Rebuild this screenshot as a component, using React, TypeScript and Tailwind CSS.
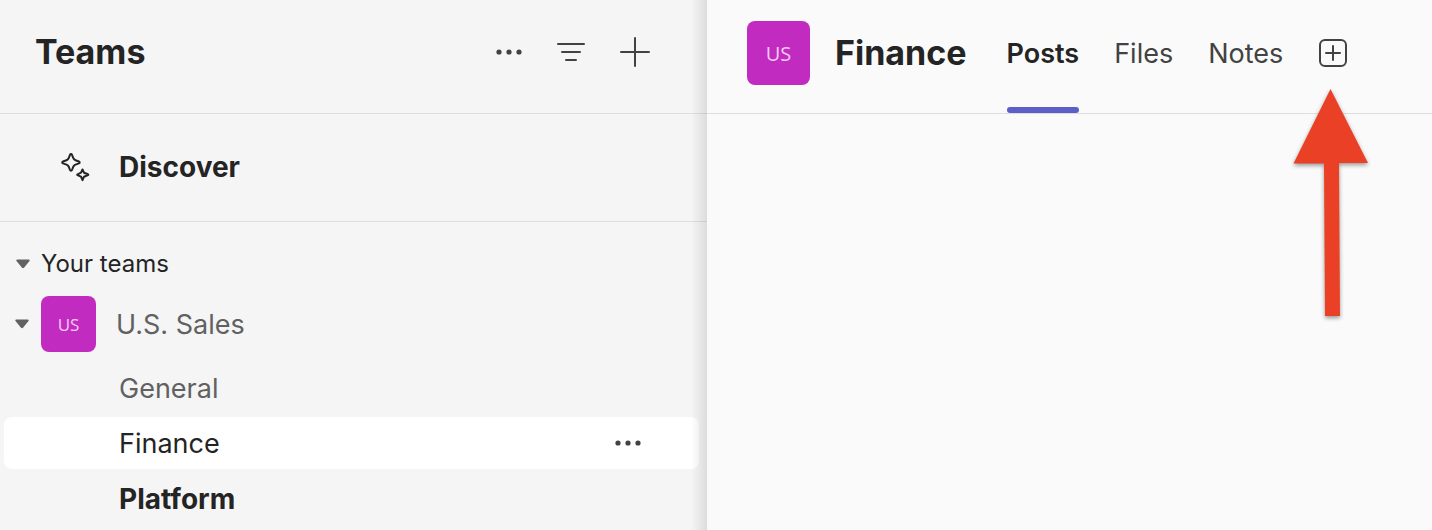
import React from "react";

function Avatar({ large = false }: { large?: boolean }) {
  return (
    <span
      aria-hidden="true"
      className={
        "flex shrink-0 items-center justify-center rounded-lg bg-[#c22bc0] pt-0.5 font-['Open_Sans',sans-serif] text-[#f3cdf2] " +
        (large ? "h-16 w-[63px] text-[20px] leading-6" : "h-14 w-[55px] text-[17px] leading-6")
      }
    >
      US
    </span>
  );
}

function Dots() {
  return (
    <svg width="28" height="8" viewBox="0 0 28 8" fill="#424242" aria-hidden="true">
      <circle cx="4" cy="4" r="2.6" />
      <circle cx="14" cy="4" r="2.6" />
      <circle cx="24" cy="4" r="2.6" />
    </svg>
  );
}

function Caret() {
  return (
    <svg width="14" height="10" viewBox="0 0 14 10" fill="#616161" aria-hidden="true">
      <path d="M1.2.5h11.6c.8 0 1.2.9.7 1.5L8 8.8c-.6.6-1.4.6-2 0L.5 2C0 1.400.4.5 1.200.5z" />
    </svg>
  );
}

const channels = [
  { name: "General", style: "text-[27px] text-[#616161]" },
  { name: "Finance", style: "bg-white text-[27px] text-[#242424]", active: true },
  { name: "Platform", style: "text-[28px] font-bold text-[#242424]" },
];

function Sidebar() {
  return (
    <aside className="relative w-[707px] shrink-0 bg-[#f5f5f5]">
      <header className="flex h-[114px] items-center border-b border-[#dedede] pr-[56px] pb-2.5 pl-[35px]">
        <h1 className="flex-1 text-[34px] leading-10 font-bold">Teams</h1>
        <div className="flex items-center gap-[34px]">
          <button type="button" aria-label="More options">
            <Dots />
          </button>
          <button type="button" aria-label="Filter">
            <svg width="28" height="20" viewBox="0 0 28 20" fill="none" stroke="#424242" strokeWidth="2" strokeLinecap="round" aria-hidden="true">
              <path d="M1 2h26M5 10h18M9 18h10" />
            </svg>
          </button>
          <button type="button" aria-label="Create or join a team">
            <svg width="32" height="32" viewBox="0 0 32 32" fill="none" stroke="#424242" strokeWidth="2" strokeLinecap="round" aria-hidden="true">
              <path d="M16 2v28M2 16h28" />
            </svg>
          </button>
        </div>
      </header>

      <button type="button" className="flex h-[108px] w-full items-center gap-[29px] border-b border-[#dedede] pb-0.5 pl-[60px] text-[28px] leading-9 font-bold">
        <svg width="30" height="30" viewBox="0 0 30 30" fill="none" stroke="#242424" strokeWidth="2" strokeLinejoin="round" aria-hidden="true">
          <path d="M11 2c.5 0 .8.3 1 .8l1.200 3.100c.4 1.200 1.200 1.900 2.300 2.300l3.400 1.300c1 .4 1 1.500 0 1.900l-3.400 1.200c-1.100.4-1.900 1.200-2.300 2.300L12 18c-.4 1-1.600 1-2 0l-1.200-3.100c-.4-1.100-1.200-1.900-2.300-2.300L3 11.400c-1-.4-1-1.500 0-1.900l3.500-1.300c1.100-.4 1.900-1.100 2.300-2.300L10 2.800c.2-.5.5-.8 1-.8z" />
          <path d="M22.500 17.500l1.500 3.200 4 1.600c.4.200.4.600 0 .8l-4 1.600-1.500 3.500-1.500-3.500-3.500-1.600c-.4-.2-.4-.6 0-.8l3.500-1.600z" />
        </svg>
        Discover
      </button>

      <nav aria-label="Your teams" className="pt-[26px] pr-2 pb-1.5 pl-1">
        <button type="button" className="flex h-8 items-center gap-[11px] pl-3 text-[24px] leading-8">
          <Caret />
          Your teams
        </button>
        <button type="button" className="mt-4 flex h-14 items-center gap-5 text-[27px] leading-9 text-[#616161]">
          <span className="flex items-center gap-3 pl-[11px]">
            <Caret />
            <Avatar />
          </span>
          <span className="pt-0.5">U.S. Sales</span>
        </button>
        <ul className="mt-2.5 flex flex-col gap-[3px]">
          {channels.map((c) => (
            <li key={c.name} className={"flex h-[52px] items-center rounded-lg pr-[57px] pl-[115px] leading-9 " + c.style}>
              <a href="#" className="flex-1 pt-0.5" aria-current={c.active ? "page" : undefined}>
                {c.name}
              </a>
              {c.active && (
                <button type="button" aria-label="More channel options">
                  <Dots />
                </button>
              )}
            </li>
          ))}
        </ul>
      </nav>
      <div className="pointer-events-none absolute inset-y-0 right-0 w-4 bg-linear-to-r from-transparent to-black/10" />
    </aside>
  );
}

function Arrow() {
  return (
    <svg
      className="pointer-events-none absolute top-[50px] left-1/2 -translate-x-1/2 drop-shadow-[0_2px_2px_rgba(0,0,0,0.4)]"
      width="80"
      height="230"
      viewBox="0 0 80 230"
      fill="#ea4025"
      aria-hidden="true"
    >
      <path d="M37.500 1L75 75H46L47 228H32L31 75.500H.5z" />
    </svg>
  );
}

export default function App() {
  return (
    <div className="flex min-h-screen bg-[#fafafa] font-[Inter,'Liberation_Sans',sans-serif] text-[#242424]">
      <Sidebar />
      <main className="min-w-0 flex-1">
        <header className="flex h-[114px] items-center border-b border-[#dedede] pb-2 pl-10">
          <Avatar large />
          <h2 className="ml-[25px] text-[34px] leading-10 font-bold">Finance</h2>
          <nav aria-label="Channel tabs" className="ml-10 flex items-center gap-[35px] text-[27px] leading-9 text-[#424242]">
            <a href="#" aria-current="page" className="relative pt-0.5 font-semibold text-[#242424]">
              Posts
              <span className="absolute inset-x-0 top-[73px] h-1.5 rounded-full bg-[#5b5fc7]" />
            </a>
            <a href="#" className="pt-0.5">Files</a>
            <a href="#" className="pt-0.5">Notes</a>
            <button type="button" aria-label="Add a tab" className="relative">
              <svg width="30" height="30" viewBox="0 0 30 30" fill="none" stroke="#424242" strokeWidth="2" strokeLinecap="round" aria-hidden="true">
                <rect x="2" y="2" width="26" height="26" rx="5" />
                <path d="M15 8v14M8 15h14" />
              </svg>
              <Arrow />
            </button>
          </nav>
        </header>
      </main>
    </div>
  );
}
